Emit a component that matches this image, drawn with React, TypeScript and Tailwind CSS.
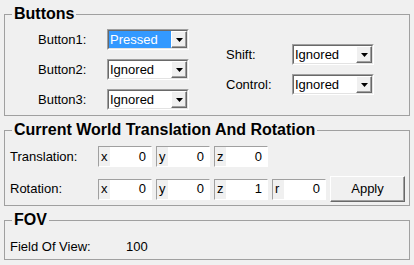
import React from "react";

const font = { fontFamily: '"Liberation Sans", Arial, sans-serif' };

const Arrow = () => (
  <svg width="7" height="4" viewBox="0 0 7 4">
    <polygon points="0,0 7,0 3.5,4" fill="#000" />
  </svg>
);

const Combo = ({ value, pressed }: { value: string; pressed?: boolean }) => (
  <div className="flex w-[82px] h-[21px] border border-t-[#a0a0a0] border-l-[#a0a0a0] border-b-white border-r-white">
    <div className="flex flex-1 border border-t-[#696969] border-l-[#696969] border-b-[#e3e3e3] border-r-[#e3e3e3] bg-white">
      <div
        className={
          "flex-1 flex items-center pl-[1px] text-[13px] leading-none " +
          (pressed ? "bg-[#3399ff] text-white" : "text-black")
        }
      >
        {value}
      </div>
      <div className="w-[16px] flex items-center justify-center bg-[#f0f0f0] border border-t-white border-l-white border-b-[#696969] border-r-[#696969] shadow-[inset_-1px_-1px_0_#a0a0a0]">
        <Arrow />
      </div>
    </div>
  </div>
);

const Field = ({ label, value }: { label: string; value: string }) => (
  <div className="flex w-[54px] h-[21px] border border-t-[#a0a0a0] border-l-[#a0a0a0] border-b-white border-r-white text-[13px]">
    <div className="w-[11px] pl-[2px] flex items-center">{label}</div>
    <div className="flex-1 bg-white flex items-center justify-end pr-[5px]">{value}</div>
  </div>
);

const Group = ({
  title,
  className,
  children,
}: {
  title: string;
  className: string;
  children: React.ReactNode;
}) => (
  <fieldset className={"mx-[4px] border border-[#a0a0a0] px-0 " + className}>
    <legend className="ml-[7px] px-[2px] text-[16px] leading-[18px] font-bold text-black">
      {title}
    </legend>
    {children}
  </fieldset>
);

export default function App() {
  return (
    <div
      className="w-[414px] h-[265px] bg-[#f0f0f0] text-black text-[13px] overflow-hidden pt-[5px]"
      style={font}
    >
      <Group title="Buttons" className="pt-[6px] pb-[5px]">
        <div className="flex items-center pl-[33px]">
          <div className="flex flex-col gap-[9px]">
            {[
              ["Button1:", "Pressed", true],
              ["Button2:", "Ignored", false],
              ["Button3:", "Ignored", false],
            ].map(([l, v, p]) => (
              <div key={l as string} className="flex items-center">
                <span className="w-[69px]">{l}</span>
                <Combo value={v as string} pressed={p as boolean} />
              </div>
            ))}
          </div>
          <div className="flex flex-col gap-[9px] ml-[37px]">
            {[
              ["Shift:", "Ignored"],
              ["Control:", "Ignored"],
            ].map(([l, v]) => (
              <div key={l} className="flex items-center">
                <span className="w-[66px]">{l}</span>
                <Combo value={v} />
              </div>
            ))}
          </div>
        </div>
      </Group>

      <Group title="Current World Translation And Rotation" className="mt-[5px] pt-[7px] pb-[3px]">
        <div className="flex flex-col gap-[9px] pl-[5px]">
          <div className="flex items-center">
            <span className="w-[88px]">Translation:</span>
            <div className="flex gap-[4px]">
              <Field label="x" value="0" />
              <Field label="y" value="0" />
              <Field label="z" value="0" />
            </div>
          </div>
          <div className="flex items-center">
            <span className="w-[88px]">Rotation:</span>
            <div className="flex items-center gap-[4px]">
              <Field label="x" value="0" />
              <Field label="y" value="0" />
              <Field label="z" value="1" />
              <Field label="r" value="0" />
              <button className="w-[75px] h-[26px] bg-[#f0f0f0] border border-t-white border-l-white border-b-[#696969] border-r-[#696969] shadow-[inset_-1px_-1px_0_#a0a0a0] text-[13px]">
                Apply
              </button>
            </div>
          </div>
        </div>
      </Group>

      <Group title="FOV" className="mt-[5px] pt-[9px] pb-[4px]">
        <div className="flex h-[17px] leading-[17px] pl-[5px]">
          <span className="w-[116px]">Field Of View:</span>
          <span>100</span>
        </div>
      </Group>
    </div>
  );
}
